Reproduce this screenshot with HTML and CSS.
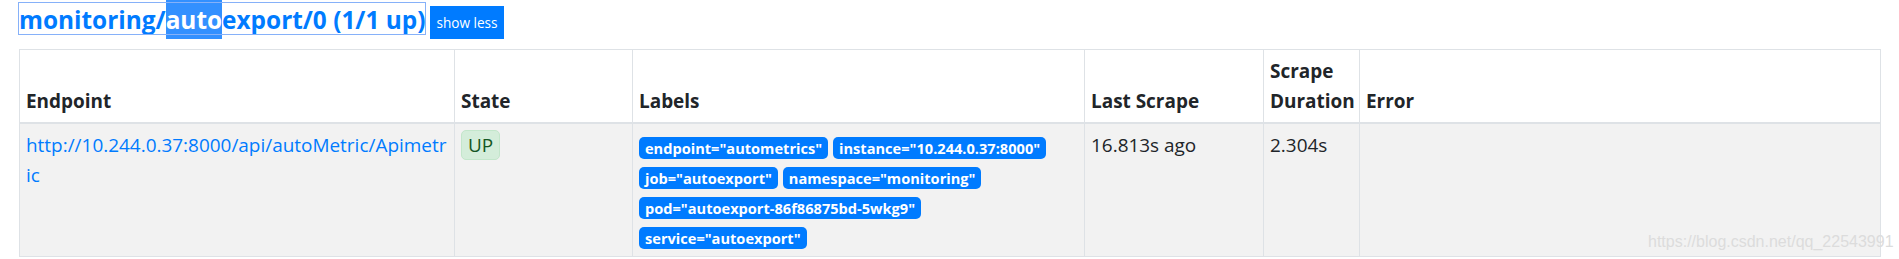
FILE: index.html
```html
<!DOCTYPE html>
<html lang="en">
<head>
  <meta charset="UTF-8" />
  <meta name="viewport" content="width=device-width, initial-scale=1.0"/>
  <title>Targets - Prometheus</title>
  <link rel="stylesheet" href="styles.css">
</head>

<body>

  <div class="container">

    <!-- job header -->
    <h2 class="job-title">
      <a class="job-link" href="#job-monitoring/autoexport/0">monitoring/<span class="sel">auto</span>export/0 (1/1 up)</a>
      <button type="button" class="btn-toggle">show less</button>
    </h2>

    <table class="targets">
      <colgroup>
        <col class="c-endpoint">
        <col class="c-state">
        <col class="c-labels">
        <col class="c-last">
        <col class="c-duration">
        <col class="c-error">
      </colgroup>
      <thead>
        <tr>
          <th>Endpoint</th>
          <th>State</th>
          <th>Labels</th>
          <th>Last Scrape</th>
          <th>Scrape Duration</th>
          <th>Error</th>
        </tr>
      </thead>
      <tbody>
        <tr>
          <td class="endpoint"><a href="#">http://10.244.0.37:8000/api/autoMetric/Apimetric</a></td>
          <td><span class="state-up">UP</span></td>
          <td class="labels">
            <span class="badge">endpoint="autometrics"</span>
            <span class="badge">instance="10.244.0.37:8000"</span>
            <span class="badge">job="autoexport"</span>
            <span class="badge">namespace="monitoring"</span>
            <span class="badge">pod="autoexport-86f86875bd-5wkg9"</span>
            <span class="badge">service="autoexport"</span>
          </td>
          <td>16.813s ago</td>
          <td>2.304s</td>
          <td></td>
        </tr>
      </tbody>
    </table>

  </div>

  <div class="watermark">https://blog.csdn.net/qq_22543991</div>

</body>
</html>
```

FILE: styles.css
```css
body {
  margin: 0;
  padding: 0;
  font-family: 'Open Sans', 'Noto Sans', sans-serif;
  font-size: 18.95px;
  line-height: 30px;
  color: #212529;
  background-color: #fff;
}

.container {
  padding: 0 19px;
}

/* job header */
.job-title {
  display: flex;
  align-items: flex-start;
  gap: 5px;
  margin: 0 0 10px;
  padding: 0;
  font-size: 24.4px;
  font-weight: bold;
}

.job-link {
  margin-top: 3px;
  padding-top: 2px;
  line-height: 29px;
  color: #007bff;
  text-decoration: none;
  outline: 1px solid #86b1f9;
}

.job-link .sel {
  background-color: #3390ff;
  color: #fff;
  padding: 3px 0;
}

.btn-toggle {
  margin-top: 6px;
  height: 33px;
  padding: 0 6px;
  border: none;
  border-radius: 0;
  background-color: #007bff;
  color: #fff;
  font-family: inherit;
  font-size: 13.6px;
  line-height: 33px;
  cursor: pointer;
}

/* targets table */
.targets {
  width: 1861px;
  table-layout: fixed;
  border-collapse: collapse;
}

.c-endpoint { width: 435px; }
.c-state { width: 178px; }
.c-labels { width: 452px; }
.c-last { width: 179px; }
.c-duration { width: 96px; }
.c-error { width: 521px; }

.targets th,
.targets td {
  padding: 6px;
  border: 1px solid #dee2e6;
  text-align: left;
  vertical-align: top;
}

.targets th {
  vertical-align: bottom;
  font-weight: bold;
  border-bottom: 2px solid #dee2e6;
}

.targets tbody tr {
  background-color: #f2f2f2;
}

.endpoint a {
  color: #007bff;
  text-decoration: none;
  word-break: break-all;
}

.state-up {
  display: inline-block;
  padding: 0 6px;
  line-height: 28px;
  border: 1px solid #c3e6cb;
  border-radius: 5px;
  background-color: #d4edda;
  color: #155724;
}

.badge {
  display: inline-block;
  padding: 3.75px 6px;
  border-radius: 5px;
  background-color: #007bff;
  color: #fff;
  font-size: 14.6px;
  font-weight: bold;
  line-height: 1;
  vertical-align: -2px;
  white-space: nowrap;
}

.watermark {
  position: absolute;
  top: 234px;
  left: 1648px;
  font-family: 'Liberation Sans', Arial, sans-serif;
  font-size: 16px;
  line-height: 16px;
  color: #dcdcdc;
  white-space: nowrap;
}
```
